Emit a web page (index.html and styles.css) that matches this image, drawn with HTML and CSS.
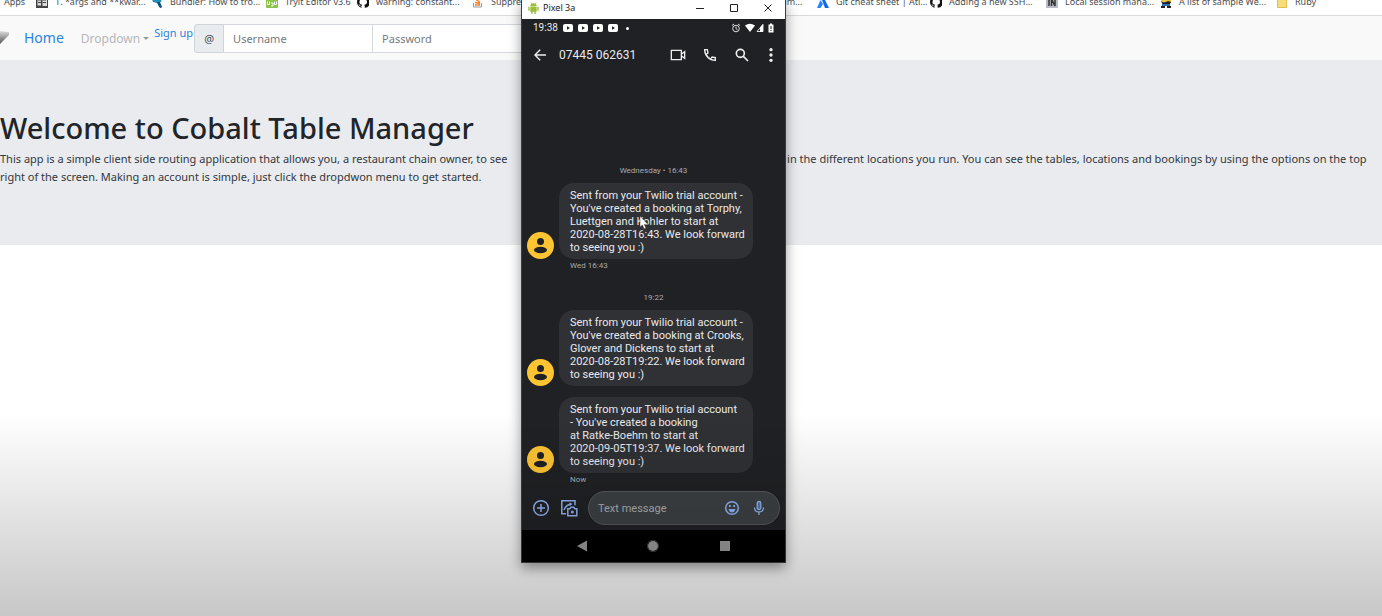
FILE: index.html
```html
<!DOCTYPE html>
<html lang="en">
<head>
<meta charset="utf-8">
<title>Cobalt Table Manager</title>
<link rel="stylesheet" href="styles.css">
</head>
<body>
<nav class="bookmarks" aria-label="Bookmarks">
  <a href="#"><span>Apps</span></a>
  <a href="#"><svg viewBox="0 0 12 12"><path fill="#444" d="M0 0h12v12H0z"/><path fill="#ddd" d="M1.500 1.500h3.500v8H1.500zM6.500 1.500H11V10H6.500z"/><path stroke="#444" d="M2 4h3M2 6.500h3M7 4h3M7 6.500h3"/></svg><span>1. *args and **kwar...</span></a>
  <a href="#"><svg viewBox="0 0 12 12"><path fill="#1e8fb5" d="M0 1l7 1 4 3-3 2 3 5-3-1-2-4-4-1z"/><path fill="#124e78" d="M6 6l3 6 2-1-2-5z"/></svg><span>Bundler: How to tro...</span></a>
  <a href="#"><svg viewBox="0 0 12 12"><rect width="12" height="12" rx="1" fill="#8bc34a"/><path fill="none" stroke="#fff" d="M1.500 5.500v3h2v-3M5 7h2v3H5M8.500 5.500v3h2v-3"/></svg><span>Tryit Editor v3.6</span></a>
  <a href="#"><svg viewBox="0 0 16 16"><path fill="#111" d="M8 0C3.580 0 0 3.580 0 8c0 3.540 2.290 6.530 5.470 7.590.4.070.55-.17.55-.38v-1.490c-2.230.48-2.690-.95-2.690-.95-.36-.92-.9-1.170-.9-1.170-.72-.5.060-.49.060-.49 1.200.09 1.500 1.200 1.500 1.200.8 1.400 2 1 2.300.7 0-.6.3-1 .5-1.200-1.800-.2-3.600-.9-3.600-4 0-.9.300-1.600.8-2.100-.1-.2-.4-1 .1-2.100 0 0 .7-.2 2.200.8a7.500 7.500 0 014 0c1.500-1 2.200-.8 2.200-.8.4 1.100.1 1.900.1 2.100.5.600.8 1.300.8 2.100 0 3.100-1.900 3.700-3.700 3.900.3.300.6.800.6 1.500v2.200c0 .2.100.5.500.4A8 8 0 008 0z"/></svg><span>warning: constant...</span></a>
  <a href="#"><svg viewBox="0 0 12 12"><path fill="none" stroke="#999" d="M1.500 7v4h8V7"/><path stroke="#f48024" stroke-width="1.500" d="M3 9h5M3 6.500l5 1M4 3.500l4 3"/></svg><span>Suppress</span></a>
  <a href="#"><svg viewBox="0 0 12 12"><circle cx="6" cy="6" r="5" fill="#888"/></svg><span>Ruby Rails Forum...</span></a>
  <a href="#"><svg viewBox="0 0 12 12"><path fill="#2684ff" d="M3.500 4L6 8l-2.500 4H0z"/><path fill="#1667e8" d="M6 0l6 12H8L5 4z"/></svg><span>Git cheat sheet | Atl...</span></a>
  <a href="#"><svg viewBox="0 0 16 16"><path fill="#111" d="M8 0C3.580 0 0 3.580 0 8c0 3.540 2.290 6.530 5.470 7.590.4.070.55-.17.55-.38v-1.490c-2.230.48-2.690-.95-2.690-.95-.36-.92-.9-1.170-.9-1.170-.72-.5.060-.49.060-.49 1.200.09 1.500 1.200 1.500 1.200.8 1.400 2 1 2.300.7 0-.6.3-1 .5-1.200-1.800-.2-3.600-.9-3.600-4 0-.9.300-1.600.8-2.100-.1-.2-.4-1 .1-2.100 0 0 .7-.2 2.200.8a7.500 7.500 0 014 0c1.500-1 2.200-.8 2.200-.8.4 1.100.1 1.900.1 2.100.5.600.8 1.300.8 2.100 0 3.100-1.900 3.700-3.700 3.900.3.300.6.800.6 1.500v2.200c0 .2.100.5.500.4A8 8 0 008 0z"/></svg><span>Adding a new SSH...</span></a>
  <a href="#"><svg viewBox="0 0 12 12"><path fill="#b9bcc4" d="M0 0h12v12H0z"/><path fill="none" stroke="#333" stroke-width="1.500" d="M3 3v7M5.500 10V3L9 10V3"/></svg><span>Local session mana...</span></a>
  <a href="#"><svg viewBox="0 0 12 12"><path fill="#e9c53c" d="M1 1h10v6H1z"/><path fill="#2f6fb4" d="M2 6h8v4H2z"/><path fill="#222" d="M1 5l3 2 4-2 3 1-1 2H3zM1 10h4v2H1zM7 10h4v2H7z"/></svg><span>A list of sample We...</span></a>
  <a href="#"><svg viewBox="0 0 12 12"><path fill="#f8dc7c" stroke="#e3bd4e" d="M1.500 .5h9v11h-9z"/></svg><span>Ruby</span></a>
</nav>

<header class="navbar">
  <svg class="brand" viewBox="0 0 10 20"><defs><linearGradient id="metal" x1="0" y1="0" x2="0" y2="1"><stop offset="0" stop-color="#ddd"/><stop offset="1" stop-color="#555"/></linearGradient></defs><path fill="url(#metal)" d="M0 3l9 1v3L0 16z"/></svg>
  <a class="home" href="#">Home</a>
  <button class="dropdown" type="button">Dropdown<span class="caret"></span></button>
  <a class="signup" href="#">Sign up</a>
  <form class="login">
    <span class="addon">@</span>
    <input type="text" placeholder="Username" aria-label="Username">
    <input type="password" placeholder="Password" aria-label="Password">
  </form>
</header>

<main class="jumbotron">
  <h1>Welcome to Cobalt Table Manager</h1>
  <p>This app is a simple client side routing application that allows you, a restaurant chain owner, to see <span class="window-gap"></span> in the different locations you run. You can see the tables, locations and bookings by using the options on the top right of the screen. Making an account is simple, just click the dropdwon menu to get started.</p>
</main>

<section class="phone" aria-label="Pixel 3a">
  <div class="titlebar">
    <svg class="droid" viewBox="0 0 12 14"><path fill="#9cbe3a" d="M2.500 4.500a3.500 3.300 0 017 0zM2.500 5h7v5.500h-1V13H7v-2.500H5V13H3.500v-2.500h-1zM.3 5h1.500v4.500H.3zM10.200 5h1.500v4.500h-1.500z"/><path stroke="#9cbe3a" stroke-width=".6" d="M3 .3l1.200 2M9 .3L7.800 2.300"/></svg>
    <span class="title">Pixel 3a</span>
    <button type="button" aria-label="Minimise"><svg viewBox="0 0 10 10"><path d="M1 5.500h8"/></svg></button>
    <button type="button" aria-label="Maximise"><svg viewBox="0 0 10 10"><path d="M1.500 1.500h7v7h-7z"/></svg></button>
    <button type="button" aria-label="Close"><svg viewBox="0 0 10 10"><path d="M1.500 1.500l7 7M8.500 1.500l-7 7"/></svg></button>
  </div>
  <div class="status">
    <span class="clock">19:38</span>
    <svg class="yt" viewBox="0 0 10 8"><rect width="10" height="8" rx="2" fill="#fff"/><path fill="#202124" d="M4 2.300v3.400L7 4z"/></svg>
    <svg class="yt" viewBox="0 0 10 8"><rect width="10" height="8" rx="2" fill="#fff"/><path fill="#202124" d="M4 2.300v3.400L7 4z"/></svg>
    <svg class="yt" viewBox="0 0 10 8"><rect width="10" height="8" rx="2" fill="#fff"/><path fill="#202124" d="M4 2.300v3.400L7 4z"/></svg>
    <svg class="yt" viewBox="0 0 10 8"><rect width="10" height="8" rx="2" fill="#fff"/><path fill="#202124" d="M4 2.300v3.400L7 4z"/></svg>
    <span class="more-dot"></span>
    <svg class="signals" viewBox="0 0 44 10"><g fill="none" stroke="#ddd"><circle cx="5" cy="5.500" r="3.300"/><path d="M5 3.500v2.200l1.500 1M1 2.500L3 1M9 2.500L7 1"/></g><path fill="#fff" d="M14 2.500q5-3.500 10 0L19 9z"/><path fill="none" stroke="#ddd" d="M32 1.500v7h-6z"/><path fill="#fff" d="M32 1v8h-3V4.500zM39 .5h2v1h1.500v8h-5v-8H39z"/><path stroke="#202124" d="M40 3v3M40 7v1"/></svg>
  </div>
  <div class="appbar">
    <button type="button" aria-label="Back"><svg viewBox="0 0 24 24"><path fill="#eee" d="M21 11H7l6-6-1.500-1.500L3 12l8.500 8.500L13 19l-6-6h14z"/></svg></button>
    <span class="number">07445 062631</span>
    <button type="button" aria-label="Video call"><svg viewBox="0 0 24 24"><path fill="none" stroke="#eee" stroke-width="2" d="M2 5h15v14H2zM17 11l5-4v10l-5-4"/></svg></button>
    <button type="button" aria-label="Call"><svg viewBox="0 0 24 24"><path fill="none" stroke="#eee" stroke-width="2" d="M4 4h4l1 5-3 2c1.500 3 4 5.500 7 7l2-3 5 1v4c-9 0-16-7-16-16z"/></svg></button>
    <button type="button" aria-label="Search"><svg viewBox="0 0 24 24"><g fill="none" stroke="#eee" stroke-width="2.500"><circle cx="9.500" cy="9.500" r="6"/><path d="M14 14l7 7"/></g></svg></button>
    <button type="button" aria-label="More"><svg viewBox="0 0 24 24"><g fill="#eee"><circle cx="12" cy="4" r="2.500"/><circle cx="12" cy="12" r="2.500"/><circle cx="12" cy="20" r="2.500"/></g></svg></button>
  </div>

  <div class="thread">
    <div class="day">Wednesday • 16:43</div>
    <div class="message">
      <svg class="avatar" viewBox="0 0 27 27"><circle cx="13.500" cy="13.500" r="13.500" fill="#fec432"/><circle cx="13.500" cy="9.500" r="3.500" fill="#202124"/><ellipse cx="13.500" cy="18" rx="6.500" ry="3.300" fill="#202124"/></svg>
      <p>Sent from your Twilio trial account -<br>You've created a booking at Torphy,<br>Luettgen and Kohler to start at<br>2020-08-28T16:43. We look forward<br>to seeing you :)</p>
    </div>
    <div class="sent">Wed 16:43</div>
    <div class="day later">19:22</div>
    <div class="message">
      <svg class="avatar" viewBox="0 0 27 27"><circle cx="13.500" cy="13.500" r="13.500" fill="#fec432"/><circle cx="13.500" cy="9.500" r="3.500" fill="#202124"/><ellipse cx="13.500" cy="18" rx="6.500" ry="3.300" fill="#202124"/></svg>
      <p>Sent from your Twilio trial account -<br>You've created a booking at Crooks,<br>Glover and Dickens to start at<br>2020-08-28T19:22. We look forward<br>to seeing you :)</p>
    </div>
    <div class="message next">
      <svg class="avatar" viewBox="0 0 27 27"><circle cx="13.500" cy="13.500" r="13.500" fill="#fec432"/><circle cx="13.500" cy="9.500" r="3.500" fill="#202124"/><ellipse cx="13.500" cy="18" rx="6.500" ry="3.300" fill="#202124"/></svg>
      <p>Sent from your Twilio trial account<br>- You've created a booking<br>at Ratke-Boehm to start at<br>2020-09-05T19:37. We look forward<br>to seeing you :)</p>
    </div>
    <div class="sent">Now</div>
  </div>

  <div class="composer">
    <button type="button" aria-label="Add"><svg viewBox="0 0 18 18"><g fill="none" stroke="#8fb1f0" stroke-width="1.500"><circle cx="9" cy="9" r="7.300"/><path d="M9 5v8M5 9h8"/></g></svg></button>
    <button type="button" aria-label="Gallery"><svg viewBox="0 0 18 18"><g fill="none" stroke="#8fb1f0" stroke-width="1.500"><path d="M6 14.800H1.800V1.800H15v4.500M4 11q2-5 6-5.500"/><path d="M7.800 9.800h2l1-1.500h3l1 1.500h2v7h-9z"/></g><path fill="#8fb1f0" d="M9 3.500l3.500 1.300L10 7z"/><circle cx="12.300" cy="13" r="1.500" fill="#8fb1f0"/></svg></button>
    <div class="field">
      <input type="text" placeholder="Text message" aria-label="Text message">
      <button type="button" aria-label="Emoji"><svg viewBox="0 0 16 16"><g fill="none" stroke="#8fb1f0" stroke-width="1.500"><circle cx="8" cy="8" r="6.300"/></g><path fill="#8fb1f0" d="M4.500 9h7q-1 3.500-3.500 3.500T4.500 9zM5 5h1.700v2H5zM9.300 5H11v2H9.300z"/></svg></button>
      <button type="button" aria-label="Voice"><svg viewBox="0 0 16 16"><g fill="none" stroke="#8fb1f0" stroke-width="1.300"><rect x="6.200" y="1.500" width="3.600" height="8" rx="1.800" fill="#55719f"/><path d="M3.500 7.500c0 6 9 6 9 0M8 12v3"/></g></svg></button>
    </div>
  </div>
  <div class="softkeys">
    <button type="button" aria-label="Back"><svg viewBox="0 0 12 12"><path fill="#999" d="M11 .5v11L1 6z"/></svg></button>
    <button type="button" aria-label="Home"><svg viewBox="0 0 12 12"><circle cx="6" cy="6" r="5" fill="#999"/><circle cx="6" cy="6" r="5.700" fill="none" stroke="#777" stroke-width=".5"/></svg></button>
    <button type="button" aria-label="Recents"><svg viewBox="0 0 12 12"><path fill="#999" d="M1 1h10v10H1z"/></svg></button>
  </div>
  <svg class="pointer" viewBox="0 0 10 14"><path fill="#fff" stroke="#333" stroke-width=".5" d="M1 0v11l2.500-2L5 13l2-1-1.700-3.500H9z"/></svg>
</section>
<div class="shade"></div>
</body>
</html>
```
FILE: styles.css
```css
* { box-sizing: border-box; }
body {
  margin: 0;
  min-height: 100vh;
  position: relative;
  overflow: hidden;
  background: #fff;
  color: #212529;
  font-family: "Noto Sans", sans-serif;
}
a { color: #2b82dc; text-decoration: none; }
button { border: 0; padding: 0; background: none; font: inherit; color: inherit; display: flex; }
svg { display: block; flex: none; }

.bookmarks {
  display: grid;
  grid-template-columns: 32px 115px 115px 91px 115px 231px 114px 113px 116px 114px 116px 60px;
  grid-template-rows: 8px;
  height: 16px;
  padding-left: 4px;
  border-bottom: 1px solid #d9dbdd;
  overflow: hidden;
}
.bookmarks a {
  display: flex;
  align-items: center;
  align-self: end;
  gap: 7px;
  color: #4a4d51;
  font-size: 9px;
  line-height: 12px;
  white-space: nowrap;
}
.bookmarks svg { width: 12px; height: 12px; }

.navbar {
  display: flex;
  align-items: center;
  height: 44px;
  background: #f9f9f9;
}
.brand { width: 10px; height: 20px; }
.home { margin-left: 14px; font-size: 14px; line-height: 20px; }
.dropdown { align-items: center; gap: 3px; margin-left: 17px; font-size: 12px; color: #b5b7b9; }
.caret { border: 3px solid transparent; border-top-color: #999; border-bottom: 0; }
.signup { margin: 0 1px 10px 5px; font-size: 11px; line-height: 18px; }
.login { display: flex; height: 29px; }
.addon {
  width: 30px;
  border: 1px solid #ced4da;
  border-radius: 3px 0 0 3px;
  background: #e9ecef;
  color: #495057;
  font-size: 11px;
  line-height: 27px;
  text-align: center;
}
.login input {
  width: 149px;
  margin-right: -1px;
  padding: 0 9px;
  border: 1px solid #d5d9dd;
  border-left-width: 0;
  background: #fff;
  font: 11px "Noto Sans", sans-serif;
}
.login input:last-child { width: 160px; border-left-width: 1px; }
.login input::placeholder { color: #747a80; opacity: 1; }

.jumbotron { height: 185px; padding: 48px 0 0; background: #e9ebef; }
h1 { margin: 0; font-size: 29px; line-height: 40px; font-weight: 500; }
p { margin: 0; }
.jumbotron p { padding-top: 2px; font-size: 11px; line-height: 18px; color: #33383c; }
.window-gap { display: inline-block; width: 274px; }

.phone {
  position: absolute;
  top: 0;
  left: 521px;
  width: 265px;
  height: 563px;
  display: flex;
  flex-direction: column;
  background: #202124;
  border: 1px solid #3c3d40;
  border-top: 0;
  box-shadow: 0 5px 12px rgba(0, 0, 0, .4);
  color: #e8eaed;
  font-family: Roboto, sans-serif;
}
.titlebar { display: flex; align-items: center; height: 19px; padding: 0 12px 3px 6px; background: #fff; }
.droid { width: 11px; height: 13px; }
.title { flex: 1; margin-left: 4px; font: 9px/14px "Noto Sans", sans-serif; color: #222; }
.titlebar button { margin-left: 24px; }
.titlebar button svg { width: 10px; height: 10px; fill: none; stroke: #222; }
.status { display: flex; align-items: center; gap: 5px; height: 18px; padding: 0 10px 0 11px; }
.clock { font-size: 10px; line-height: 14px; }
.yt { width: 10px; height: 8px; }
.more-dot { width: 3px; height: 3px; margin-left: 3px; border-radius: 50%; background: #fff; }
.signals { width: 44px; height: 10px; margin-left: auto; }
.appbar { display: flex; align-items: center; height: 35px; padding: 0 6px 0 10px; }
.appbar svg { width: 16px; height: 16px; }
.number { flex: 1; margin-left: 11px; font-size: 12px; line-height: 16px; }
.appbar button + button { margin-left: 16px; }
.appbar button:last-child { margin-left: 13px; }

.thread { flex: 1; display: flex; flex-direction: column; justify-content: flex-end; padding-left: 5px; }
.day { font-size: 8px; line-height: 13px; text-align: center; margin: 0 5px 6px 0; color: #a9acb1; }
.later { margin-top: 19px; }
.message { display: flex; align-items: flex-end; gap: 5px; }
.next { margin-top: 11px; }
.avatar { width: 27px; height: 27px; }
.message p {
  width: 194px;
  padding: 6px 0 5px 11px;
  border-radius: 15px;
  background: #303135;
  font-size: 11px;
  line-height: 13px;
  white-space: nowrap;
}
.sent { padding-left: 43px; font-size: 8px; line-height: 13px; color: #a9acb1; }
.composer { display: flex; align-items: center; gap: 10px; height: 44px; padding: 0 5px 0 10px; }
.composer > button svg { width: 18px; height: 18px; }
.field {
  flex: 1;
  min-width: 0;
  display: flex;
  align-items: center;
  gap: 11px;
  height: 34px;
  padding: 0 12px 0 9px;
  border: 1px solid #55585c;
  border-radius: 17px;
  background: #3c4043;
}
.field input { flex: 1; min-width: 0; padding: 0; border: 0; background: none; font: 11px Roboto, sans-serif; }
.field input::placeholder { color: #a9adb2; opacity: 1; }
.field svg { width: 16px; height: 16px; }
.softkeys { display: flex; align-items: center; justify-content: space-around; height: 32px; padding: 0 24px; background: #000; }
.softkeys svg { width: 12px; height: 12px; }
.pointer { position: absolute; left: 117px; top: 216px; width: 10px; height: 14px; }
.shade {
  position: absolute;
  inset: 67% 0 0;
  background: linear-gradient(rgba(0, 0, 0, 0), rgba(0, 0, 0, .22));
  pointer-events: none;
}
```
